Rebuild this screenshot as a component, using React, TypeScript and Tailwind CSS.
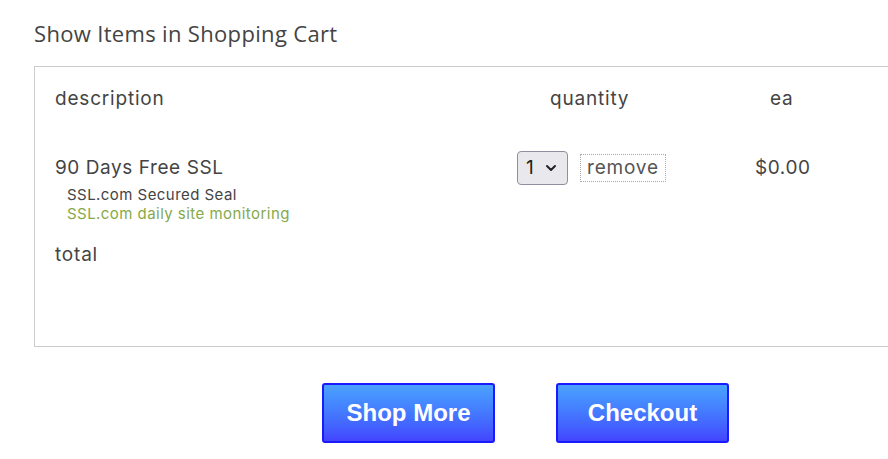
import React from "react"

export default function App() {
  return (
    <div className="w-[888px] h-[459px] overflow-hidden bg-white text-[#444] font-['Inter',sans-serif]">
      <div className="pl-[34px] pt-[19px]">
        <h1 className="text-[22px] leading-[28px] text-[#444] font-['Open_Sans',sans-serif] tracking-[0.015em]">Show Items in Shopping Cart</h1>

        {/* cart table */}
        <div className="mt-[19px] w-[880px] h-[281px] border border-[#ccc] border-r-0 pl-[20px] pt-[19px] tracking-[0.05em]">
          <div className="flex items-center h-[26px] text-[19px]">
            <div className="w-[495px]">description</div>
            <div className="w-[220px]">quantity</div>
            <div>ea</div>
          </div>

          <div className="flex mt-[42px]">
            <div className="w-[462px]">
              <div className="text-[19px] leading-[28px] tracking-[0.03em]">90 Days Free SSL</div>
              <div className="pl-[12px] mt-[3px] text-[15px] leading-[19px] tracking-[0.03em]">
                <div className="text-[#444]">SSL.com Secured Seal</div>
                <div className="text-[#86a94a]">SSL.com daily site monitoring</div>
              </div>
            </div>
            <div className="w-[238px] flex items-start gap-[12px]">
              <div className="mt-[-3px] h-[34px] w-[51px] rounded-[4px] border border-[#8f8f9d] bg-[#e9e9ed] flex items-center pl-[8px] gap-[10px]">
                <span className="text-[19px] text-[#222]">1</span>
                <svg width="12" height="8" viewBox="0 0 12 8" fill="none">
                  <path d="M2 2l4 4 4-4" stroke="#222" strokeWidth="2" strokeLinecap="round" strokeLinejoin="round" />
                </svg>
              </div>
              <div className="h-[28px] px-[6px] border border-dotted border-[#aaa] text-[19px] leading-[26px] text-[#555]">remove</div>
            </div>
            <div className="text-[19px] leading-[28px] tracking-[0.03em]">$0.00</div>
          </div>

          <div className="mt-[18px] text-[19px] leading-[28px]">total</div>
        </div>

        {/* actions */}
        <div className="flex gap-[61px] pl-[288px] mt-[36px]">
          <button className="w-[173px] h-[60px] rounded-[3px] border-2 border-[#1a1aff] bg-gradient-to-b from-[#4aa2ff] to-[#4444ff] text-white font-bold text-[24px] font-['Liberation_Sans',Arial,sans-serif]">
            Shop More
          </button>
          <button className="w-[173px] h-[60px] rounded-[3px] border-2 border-[#1a1aff] bg-gradient-to-b from-[#4aa2ff] to-[#4444ff] text-white font-bold text-[24px] font-['Liberation_Sans',Arial,sans-serif]">
            Checkout
          </button>
        </div>
      </div>
    </div>
  )
}
